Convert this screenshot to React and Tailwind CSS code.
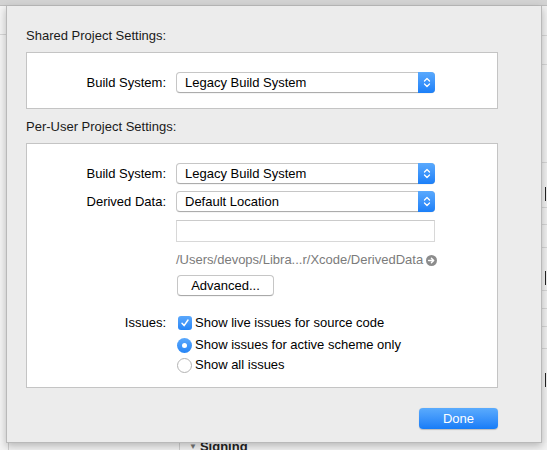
import React from 'react';

function Stepper() {
  return (
    <svg width="8" height="13" viewBox="0 0 8 13" fill="none">
      <path d="M1.5 5 L4 2.5 L6.5 5" stroke="white" strokeWidth="1.3" strokeLinecap="round" strokeLinejoin="round" />
      <path d="M1.5 8 L4 10.5 L6.5 8" stroke="white" strokeWidth="1.3" strokeLinecap="round" strokeLinejoin="round" />
    </svg>
  );
}

function Popup({ value }) {
  return (
    <div className="flex h-[21px] w-[259px] rounded-[4px] border border-[#c6c6c6] border-b-[#acacac] bg-white shadow-[0_0.5px_0.5px_rgba(0,0,0,0.08)]">
      <div className="flex flex-1 items-center pl-[8px] text-[13px] leading-[16px] text-black">{value}</div>
      <div className="-my-px -mr-px flex w-[17px] items-center justify-center rounded-r-[4px] bg-gradient-to-b from-[#59a9fd] to-[#1a7ff8]">
        <Stepper />
      </div>
    </div>
  );
}

function Row({ label, children, className = '' }) {
  return (
    <div className={`flex items-center ${className}`}>
      <div className="w-[139px] text-right text-[13px] leading-[16px] text-black">{label}</div>
      <div className="ml-[10px] flex items-center">{children}</div>
    </div>
  );
}

function Checkbox() {
  return (
    <div className="flex h-[14px] w-[14px] items-center justify-center rounded-[3px] bg-gradient-to-b from-[#5aa8fc] to-[#2585f6]">
      <svg width="10" height="10" viewBox="0 0 10 10" fill="none">
        <path d="M2 5.2 L4.1 7.6 L8 2" stroke="white" strokeWidth="1.5" strokeLinecap="round" strokeLinejoin="round" />
      </svg>
    </div>
  );
}

function Radio({ on }) {
  if (on) {
    return (
      <div className="flex h-[15px] w-[15px] items-center justify-center rounded-full bg-gradient-to-b from-[#5aa8fc] to-[#2585f6]">
        <div className="h-[5px] w-[5px] rounded-full bg-white" />
      </div>
    );
  }
  return <div className="h-[15px] w-[15px] rounded-full border border-[#b3b3b3] bg-white" />;
}

function Heading({ children, className = '' }) {
  return <div className={`text-[13px] leading-[16px] text-[#1a1a1a] ${className}`}>{children}</div>;
}

function RightStrip() {
  return (
    <div className="flex w-[5px] flex-col bg-[#f1f1f1]">
      <div className="h-[30px] border-b border-[#d6d6d6]" />
      <div className="h-[29px] border-b border-[#d6d6d6]" />
      <div className="h-[98px] border-b border-[#d6d6d6]" />
      <div className="flex h-[45px] justify-end border-b border-[#d6d6d6] pt-[24px] pr-[1px]">
        <div className="h-[14px] w-[1px] bg-[#222]" />
      </div>
      <div className="h-[17px] border-b border-[#d6d6d6]" />
      <div className="h-[23px] border-b border-[#d6d6d6]" />
      <div className="flex h-[43px] justify-end border-b border-[#d6d6d6] pt-[23px] pr-[1px]">
        <div className="h-[14px] w-[1px] bg-[#222]" />
      </div>
      <div className="h-[18px] border-b border-[#d6d6d6]" />
      <div className="h-[18px] border-b border-[#d6d6d6]" />
      <div className="h-[22px] border-b border-[#d6d6d6]" />
      <div className="flex flex-1 justify-end pt-[24px] pr-[1px]">
        <div className="h-[14px] w-[1px] bg-[#222]" />
      </div>
    </div>
  );
}

export default function App() {
  return (
    <div className="flex h-[450px] w-[547px] flex-col overflow-hidden bg-[#f3f3f3] font-['Liberation_Sans',Arial,sans-serif]">
      <div className="h-[6px] shrink-0 border-b border-[#bdbdbd] bg-[#d3d3d3]" />
      <div className="flex h-[437px] shrink-0">
        <div className="flex w-[6px] flex-col bg-[#f4f4f4]">
          <div className="h-[29px] border-b border-[#d6d6d6]" />
        </div>
        <div className="relative z-10 flex w-[536px] flex-col border-x border-b border-[#b9b9b9] bg-[#ececec] pl-[19px] pt-[22px] shadow-[0_3px_8px_rgba(0,0,0,0.25)]">
          <Heading>Shared Project Settings:</Heading>
          <div className="mt-[8px] h-[57px] w-[472px] border border-[#c4c4c4] bg-white pt-[19px]">
            <Row label="Build System:">
              <Popup value="Legacy Build System" />
            </Row>
          </div>

          <Heading className="mt-[10px]">Per-User Project Settings:</Heading>
          <div className="mt-[8px] flex h-[245px] w-[472px] flex-col border border-[#c4c4c4] bg-white pt-[19px]">
            <Row label="Build System:">
              <Popup value="Legacy Build System" />
            </Row>
            <Row label="Derived Data:" className="mt-[7px]">
              <Popup value="Default Location" />
            </Row>
            <Row label="" className="mt-[8px]">
              <div className="h-[22px] w-[259px] border border-[#d8d8d8] border-t-[#cbcbcb] bg-white" />
            </Row>
            <Row label="" className="mt-[10px]">
              <div className="flex h-[16px] items-center text-[13px] leading-[16px] text-[#7b7b7b]">
                /Users/devops/Libra...r/Xcode/DerivedData
                <svg className="ml-[3px]" width="11" height="11" viewBox="0 0 11 11">
                  <circle cx="5.5" cy="5.5" r="5.5" fill="#8c8c8c" />
                  <path d="M2.6 5.5 H7.6 M5.4 3.2 L7.7 5.5 L5.4 7.8" stroke="white" strokeWidth="1.4" fill="none" strokeLinecap="round" strokeLinejoin="round" />
                </svg>
              </div>
            </Row>
            <Row label="" className="mt-[7px]">
              <div className="ml-[1px] flex h-[21px] w-[97px] items-center justify-center rounded-[4px] border border-[#c6c6c6] border-b-[#a9a9a9] bg-white text-[13px] leading-[16px] text-black shadow-[0_0.5px_0.5px_rgba(0,0,0,0.08)]">
                Advanced...
              </div>
            </Row>
            <Row label="Issues:" className="mt-[18px] h-[18px]">
              <div className="ml-[2px] flex items-center gap-[3px] text-[13px] leading-[16px] text-black">
                <Checkbox />
                <span>Show live issues for source code</span>
              </div>
            </Row>
            <Row label="" className="mt-[4px] h-[18px]">
              <div className="ml-[1px] flex items-center gap-[3px] text-[13px] leading-[16px] text-black">
                <Radio on />
                <span>Show issues for active scheme only</span>
              </div>
            </Row>
            <Row label="" className="mt-[2px] h-[18px]">
              <div className="ml-[1px] flex items-center gap-[3px] text-[13px] leading-[16px] text-black">
                <Radio />
                <span>Show all issues</span>
              </div>
            </Row>
          </div>

          <div className="mt-[20px] flex w-[472px] justify-end">
            <div className="flex h-[21px] w-[79px] items-center justify-center rounded-[4px] bg-gradient-to-b from-[#5aabfd] to-[#157cf7] text-[13px] leading-[16px] text-white shadow-[0_0.5px_1px_rgba(0,0,0,0.2)]">
              Done
            </div>
          </div>
        </div>
        <RightStrip />
      </div>
      <div className="flex h-[7px] shrink-0 overflow-hidden">
        <div className="w-[9px] border-r border-[#d0d0d0]" />
        <div className="w-[171px] border-r border-[#d0d0d0]" />
        <div className="-mt-[4px] flex items-start pl-[9px] text-[13px] font-bold leading-[16px] text-[#222]">
          <span className="mr-[3px] text-[8px] leading-[16px] text-[#777]">▼</span>
          Signing
        </div>
      </div>
    </div>
  );
}
